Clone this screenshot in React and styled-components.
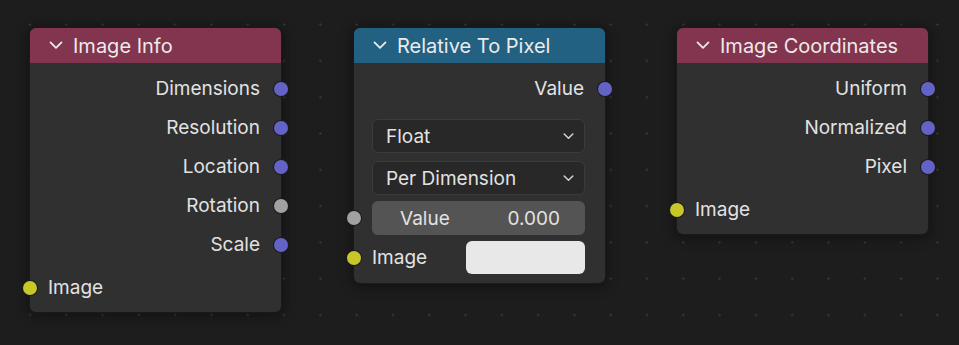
import React from 'react';
import styled, { createGlobalStyle } from 'styled-components';

const GlobalStyle = createGlobalStyle`
  html, body {
    margin: 0;
    padding: 0;
    background: #1d1d1d;
  }
  body {
    font-family: Inter, "Noto Sans", "DejaVu Sans", sans-serif;
  }
`;

const Canvas = styled.div`
  position: relative;
  width: 959px;
  height: 345px;
  overflow: hidden;
  background-color: #1d1d1d;
  background-image: radial-gradient(circle, #383838 0.9px, transparent 1.4px);
  background-size: 36.3px 36.3px;
  background-position: 11.85px 6.45px;
`;

const Node = styled.div`
  position: absolute;
  left: ${(p) => p.x}px;
  top: ${(p) => p.y}px;
  width: 251px;
  background: #303030;
  border-radius: 6px;
  box-shadow: 0 0 0 1px #1a1a1a, 0 2px 12px 3px rgba(0, 0, 0, 0.35);
  color: #e2e2e2;
  font-size: 19px;
`;

const Header = styled.div`
  display: flex;
  align-items: center;
  gap: 10px;
  height: 35px;
  padding-left: 19px;
  background: ${(p) => p.color};
  border-radius: 6px 6px 0 0;
  color: #ebebeb;
  font-size: 20px;
`;

const Body = styled.div`
  display: flex;
  flex-direction: column;
  padding: 6px 0 ${(p) => p.bottom || 5}px;
`;

const Row = styled.div`
  position: relative;
  display: flex;
  align-items: center;
  justify-content: ${(p) => (p.output ? 'flex-end' : 'flex-start')};
  height: 39px;
  padding: ${(p) => (p.output ? '0 21px 0 0' : '0 0 0 18px')};
  margin-top: ${(p) => p.mt || 0}px;
  gap: 12px;
`;

const Socket = styled.span`
  position: absolute;
  top: 50%;
  ${(p) => (p.output ? 'right: -7px;' : 'left: -7px;')}
  width: 14px;
  height: 14px;
  margin-top: -7px;
  border-radius: 50%;
  background: ${(p) => p.color};
  box-shadow: 0 0 0 1px #1b1b1b;
  box-sizing: border-box;
`;

const Controls = styled.div`
  display: flex;
  flex-direction: column;
  padding: 0 20px 0 18px;
  margin-top: ${(p) => p.mt || 0}px;
`;

const Dropdown = styled.div`
  display: flex;
  align-items: center;
  justify-content: space-between;
  height: 34px;
  box-sizing: border-box;
  margin-top: ${(p) => p.mt || 0}px;
  padding: 0 10px 0 13px;
  background: #282828;
  border: 1px solid #3b3b3b;
  border-radius: 6px;
  color: #e2e2e2;
`;

const Slider = styled.div`
  position: relative;
  display: flex;
  align-items: center;
  justify-content: space-between;
  height: 34px;
  margin-top: ${(p) => p.mt || 0}px;
  padding: 0 25px 0 28px;
  background: #545454;
  border-radius: 6px;
`;

const ColorRow = styled.div`
  position: relative;
  display: flex;
  align-items: center;
  justify-content: space-between;
  height: 33px;
  margin-top: 6px;
`;

const Swatch = styled.div`
  width: 119px;
  height: 33px;
  background: ${(p) => p.color};
  border-radius: 6px;
`;

const Chevron = ({ size = 14 }) => (
  <svg width={size} height={size * 0.6} viewBox="0 0 14 8" fill="none">
    <path d="M1.5 1.2 L7 6.6 L12.5 1.2" stroke="currentColor" strokeWidth="1.8" strokeLinecap="round" strokeLinejoin="round" />
  </svg>
);

const SmallChevron = styled.span`
  display: flex;
  color: #d8d8d8;
`;

const VECTOR = '#6363c7';
const FLOAT = '#a1a1a1';
const COLOR = '#c7c729';

const App = () => (
  <>
    <GlobalStyle />
    <Canvas>
      <Node x={30} y={28}>
        <Header color="#83344f">
          <Chevron />
          Image Info
        </Header>
        <Body>
          {['Dimensions', 'Resolution', 'Location'].map((s) => (
            <Row output key={s}>
              {s}
              <Socket output color={VECTOR} />
            </Row>
          ))}
          <Row output>
            Rotation
            <Socket output color={FLOAT} />
          </Row>
          <Row output>
            Scale
            <Socket output color={VECTOR} />
          </Row>
          <Row mt={4}>
            <Socket color={COLOR} />
            Image
          </Row>
        </Body>
      </Node>

      <Node x={354} y={28}>
        <Header color="#236183">
          <Chevron />
          Relative To Pixel
        </Header>
        <Body bottom={9}>
          <Row output>
            Value
            <Socket output color={VECTOR} />
          </Row>
          <Controls mt={11}>
            <Dropdown>
              Float
              <SmallChevron>
                <Chevron size={11} />
              </SmallChevron>
            </Dropdown>
            <Dropdown mt={8}>
              Per Dimension
              <SmallChevron>
                <Chevron size={11} />
              </SmallChevron>
            </Dropdown>
            <Slider mt={6}>
              <Socket color={FLOAT} style={{ left: '-25px' }} />
              <span>Value</span>
              <span>0.000</span>
            </Slider>
            <ColorRow>
              <Socket color={COLOR} style={{ left: '-25px' }} />
              Image
              <Swatch color="#e8e8e8" />
            </ColorRow>
          </Controls>
        </Body>
      </Node>

      <Node x={677} y={28}>
        <Header color="#83344f">
          <Chevron />
          Image Coordinates
        </Header>
        <Body>
          {['Uniform', 'Normalized', 'Pixel'].map((s) => (
            <Row output key={s}>
              {s}
              <Socket output color={VECTOR} />
            </Row>
          ))}
          <Row mt={4}>
            <Socket color={COLOR} />
            Image
          </Row>
        </Body>
      </Node>
    </Canvas>
  </>
);

export default App;
